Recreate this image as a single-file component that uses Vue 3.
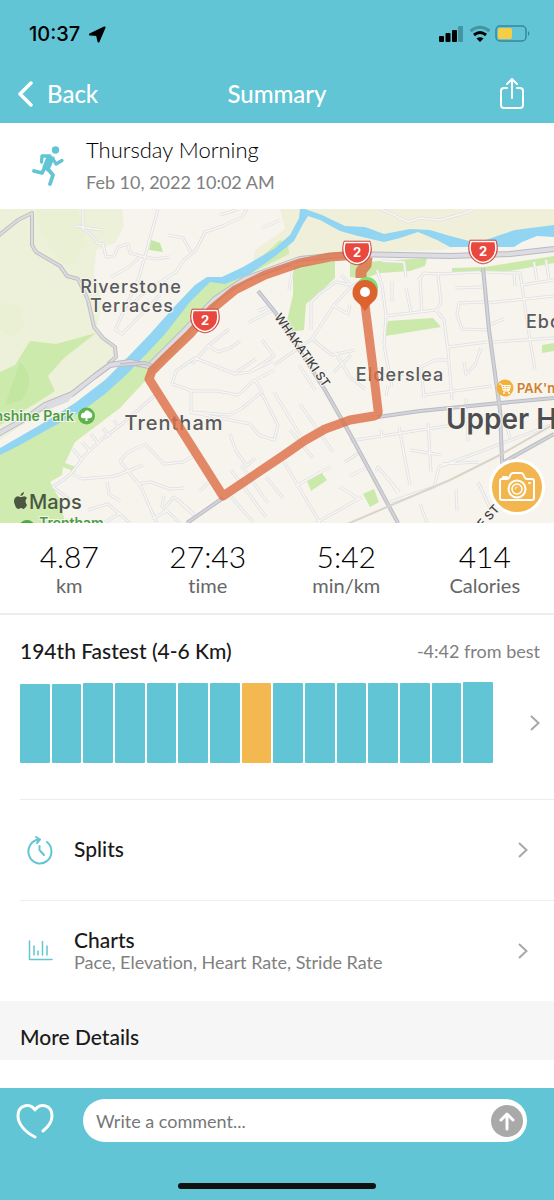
<script setup>
import { ref } from 'vue'

const comment = ref('')

const stats = [
  { value: '4.87', unit: 'km' },
  { value: '27:43', unit: 'time' },
  { value: '5:42', unit: 'min/km' },
  { value: '414', unit: 'Calories' },
]

const bars = [79, 79, 80, 80, 80, 80, 80, 80, 80, 80, 80, 80, 80, 80, 81].map((height, i) => ({
  height,
  current: i === 7,
}))

const shields = [
  { x: 205, y: 320 },
  { x: 357, y: 252 },
  { x: 483, y: 251 },
]

const minorRoads = [
  'M158 209 L144 260 L138 280 L115 330',
  'M83 209 V229 L93 236 L97 243 L103 244 L106 257 L114 256 L118 247 L128 244 L130 253 L141 256 L155 259 L170 257',
  'M75 226 L102 230',
  'M141 256 L129 267 L111 277',
  'M168 235 L183 238 L191 252',
  'M247 209 L242 217 L223 226 L205 232 L196 250 L184 260 L176 272 L145 292 L126 310',
  'M160 295 L122 334 L114 329',
  'M220 215 L239 209 M262 228 L280 220',
  'M380 209 L392 214 L408 222 L420 218 L440 220 L465 213 L474 209',
  'M248 323 L275 309 M258 311 L268 307',
  'M229 329 L208 346 L192 364 M208 346 L218 352 L230 348 L240 341',
  'M256 359 L235 373 M262 340 L274 356 L253 370',
  'M172 384 L176 371 L195 358 L210 364 L235 374 L250 372 L272 361',
  'M274 370 L252 382 L238 395 L217 391 L192 391 L187 389 L172 384',
  'M191 390 V412 L230 415 L242 408 L262 392 L255 380',
  'M190 412 L250 424 L259 435 L274 440 L278 425 L262 394',
  'M230 434 L236 451 L247 466 L255 458',
  'M160 391 L122 424 L101 440 L85 455 L70 475 L53 487 L70 500',
  'M118 427 L114 420 M110 437 L103 428 M99 444 L91 434 M90 451 L82 442 M81 459 L73 449',
  'M73 474 L82 479 L115 476 L143 465',
  'M120 461 L141 487 L151 510 L157 523 M120 461 L127 453 L145 444 L152 451 L164 464 L183 462 L195 455',
  'M137 484 L151 482 L170 489 L184 488',
  'M107 482 L109 494 L120 501 M88 510 L108 504 L130 523 M104 523 L120 513',
  'M164 496 L162 506 L180 523 M166 506 L174 497 L197 518 M152 519 L168 510',
  'M200 491 L209 482 M177 499 L194 514',
  'M231 470 L266 517 M225 490 L253 522 M241 465 L268 503 M266 477 L283 498',
  'M284 462 L320 523 M296 486 L330 467 M290 430 L313 458 M300 404 L333 452 M274 392 L300 435',
  'M350 441 L453 425 M381 430 L382 438 M399 427 L404 454 L410 485 M428 423 L431 472',
  'M360 452 L345 462 M366 468 L350 476 M376 471 L378 467 L399 492 M388 478 L398 493',
  'M390 502 L434 487 L439 467 L554 424 M442 464 L479 462 M340 487 L360 500',
  'M316 523 L362 497 M456 489 L457 511 M478 482 L490 508 M420 504 L427 523',
  'M466 398 L468 442 M503 413 L510 438',
  'M351 355 L334 372 M335 352 L350 377 L365 389 M299 365 L315 390',
  'M274 365 L312 339 L332 355 L355 350 M312 339 L334 305 L350 288 L362 280',
  'M311 330 V302 L320 293 L336 282 L350 285 M334 306 L348 314 L350 305',
  'M289 290 L294 262 M341 275 L350 284',
  'M377 270 L382 285 L386 315 L384 345 L392 387 M382 261 L404 262 L406 277',
  'M392 281 V302 M406 288 L411 312 M418 280 L424 273 L438 274 L480 272',
  'M438 275 L441 303 L436 310 L385 316 M436 310 L444 320 L448 350 L452 400 M420 277 L422 312',
  'M455 288 L482 287 M484 302 L459 303 L457 315 L462 329 L488 330 M489 325 L504 319',
  'M487 303 L554 296 M493 342 L554 338 M448 347 L487 342 M484 272 L520 273 L530 340 L535 370',
  'M534 262 L537 280 M546 260 L549 280 M514 273 L515 286 M522 285 L554 280',
  'M424 398 L421 367 L435 360 L448 360 M424 395 L492 386 M464 362 L466 374 L475 365 L481 348',
  'M410 450 L441 455 M378 376 L404 374 M388 386 L386 396',
]

const majorRoads = [
  'M258 291 L275 312 L325 390 L350 434 L398 523',
  'M378 417 L420 411 L490 404 L554 398',
  'M483 268 L489 330 L500 410 L502 460 L506 500',
  'M502 463 L554 434',
  'M223 498 L187 523',
  'M120 365 L145 363 L155 367',
]
</script>

<template>
  <div class="screen">
    <header class="top">
      <div class="status">
        <div class="clock">
          <span>10:37</span>
          <svg width="17" height="17" viewBox="0 0 17 17" aria-hidden="true">
            <path d="M15.500 1.500 L1 8.500 L8 9 L9.500 15.500 Z" fill="#000" stroke="#000" stroke-width="2" stroke-linejoin="round" />
          </svg>
        </div>
        <svg class="indicators" width="96" height="20" viewBox="0 0 96 20" aria-hidden="true">
          <rect x="1" y="12" width="5" height="6" rx="1" />
          <rect x="7.500" y="9" width="5" height="9" rx="1" />
          <rect x="14" y="6" width="5" height="12" rx="1" />
          <rect x="20" y="2" width="5" height="16" rx="1" fill="#4296a3" />
          <path d="M32.500 7 Q42 -0.500 51.500 7" fill="none" stroke="#4296a3" stroke-width="3" />
          <path d="M36 11 Q42 6 48 11" fill="none" stroke="#000" stroke-width="3" />
          <path d="M38.500 14.500 Q42 12 45.500 14.500 L42 18 Z" />
          <rect x="58" y="2" width="30" height="15" rx="4" fill="none" stroke="#3b8794" stroke-width="1.500" />
          <rect x="60" y="4" width="14" height="11" rx="2" fill="#f7cd46" />
          <path d="M90 7 Q93 9.500 90 12 Z" fill="#3b8794" />
        </svg>
      </div>
      <nav class="nav">
        <button class="back" type="button">
          <svg width="16" height="28" viewBox="0 0 16 28" aria-hidden="true">
            <path d="M13 3 L2 14 L13 25" fill="none" stroke="#fff" stroke-width="3.500" stroke-linecap="round" stroke-linejoin="round" />
          </svg>
          <span>Back</span>
        </button>
        <h1>Summary</h1>
        <button class="share" type="button" aria-label="Share">
          <svg width="26" height="34" viewBox="0 0 26 34" fill="none" stroke="#fff" stroke-width="2" stroke-linecap="round" stroke-linejoin="round" aria-hidden="true">
            <path d="M8 11 H5 Q2 11 2 14 V28 Q2 31 5 31 H21 Q24 31 24 28 V14 Q24 11 21 11 H18 M13 21 V2 M8 7 L13 2 L18 7" />
          </svg>
        </button>
      </nav>
    </header>

    <main>
      <section class="activity">
        <svg width="34" height="42" viewBox="0 0 34 42" fill="none" stroke="#61c5d5" stroke-linecap="round" stroke-linejoin="round" aria-hidden="true">
          <circle cx="23.500" cy="5" r="3.700" fill="#61c5d5" stroke="none" />
          <path d="M16 12 L21 13 L16 25 L12 22 Z" fill="#61c5d5" stroke-width="3" />
          <path d="M18 11 L10 11 L9.500 17 M21 14 L24 19 L30 15.500" stroke-width="3.300" />
          <path d="M13 22 L10 28 L2 26 M15 23 L21 30 L18 39" stroke-width="3.800" />
        </svg>
        <div>
          <h2>Thursday Morning</h2>
          <time datetime="2022-02-10T10:02">Feb 10, 2022 10:02 AM</time>
        </div>
      </section>

      <section class="map" aria-label="Route map">
        <svg class="map-canvas" viewBox="0 209 554 314" role="img" aria-label="Running route through Trentham and Elderslea">
          <rect y="209" width="554" height="314" fill="#f6f4ec" />
          <path d="M0 209 H122 L124 226 L115 243 L96 250 L94 275 L102 300 L97 330 L118 348 L110 365 L60 400 L0 440 Z" fill="#eef1d9" />
          <path d="M36 209 H78 L86 240 L72 268 L58 260 L40 230 Z M0 300 L20 306 L25 325 L12 337 L0 330 Z" fill="#e9f0d3" />
          <path d="M280 209 H554 V229 L500 240 L440 250 L365 252 L300 262 L250 278 L255 250 L285 229 Z" fill="#f0f0da" />
          <path d="M0 372 L15 365 L30 341 L56 344 L96 333 L64 358 L48 376 L55 391 L38 402 L0 425 Z" fill="#cdeaad" />
          <path d="M20 362 Q37 378 22 400 L5 405 Z" fill="#c3e6a1" />
          <path d="M0 450 L50 428 L105 392 L140 362 L165 330 L190 300 L208 281 L245 272 L280 240 L288 244 L289 254 L250 274 L225 295 L210 312 L185 340 L146 380 L120 408 L75 442 L65 463 L76 467 L75 472 L63 467 L62 475 L50 482 L60 500 L65 523 H0 Z" fill="#cfebb0" />
          <path d="M151 240 L160 243 L163 252 L149 250 Z" fill="#c5e7a5" />
          <path d="M293 266 L335 261 V278 L318 294 L306 304 L304 330 L290 332 L286 325 L293 295 Z" fill="#cbe9ab" />
          <path d="M350 263 L427 258 L425 266 L410 271 L380 273 L365 278 L350 277 Z M452 268 L485 267 L554 256 V263 L510 271 L452 273 Z M388 321 L433 318 L441 327 L385 336 Z M307 481 L321 472 L327 480 L311 491 Z M363 494 L374 489 L379 502 L370 507 Z M542 345 L554 343 V351 L542 353 Z" fill="#cbe9ab" />

          <path d="M0 448 L40 425 L75 403 L105 380 L125 360 L150 334 L175 306 L195 285 L207 277 L222 277 L243 267 L274 249 L290 235 L299 218 L300 209 H305 L322 215 L345 226 L365 227 L384 234 L410 229 L430 230 L450 236 L477 243 L500 235 L515 230 L554 225 V237 L537 236 L522 242 L514 247 H450 L437 240 L418 232 L400 238 L384 242 L358 236 L340 231 L320 220 L308 216 L303 224 L294 241 L274 257 L250 274 L225 284 L210 282 L190 302 L165 334 L140 361 L125 376 L105 394 L85 409 L45 431 L20 445 L0 455 Z" fill="#91d5f2" />

          <g fill="none" stroke-linejoin="round">
            <path d="M-2 236 L18 220 L32 213 V245 L36 252 L60 266 L67 276 L78 279 L88 300 L94 327 L103 338 L115 347 L116 357 L108 364" stroke="#bfc0c6" stroke-width="4" />
            <path d="M-2 236 L18 220 L32 213 V245 L36 252 L60 266 L67 276 L78 279 L88 300 L94 327 L103 338 L115 347 L116 357 L108 364" stroke="#dcdcdd" stroke-width="2" />
            <path d="M-2 434 L28 417 L45 405 L72 394 L95 376 L110 365 L130 362 L149 366 L185 330 L215 299 L245 279 L300 259 L350 254 L450 256 L510 254 L554 249" stroke="#b9bac3" stroke-width="6" />
            <path d="M-2 434 L28 417 L45 405 L72 394 L95 376 L110 365 L130 362 L149 366 L185 330 L215 299 L245 279 L300 259 L350 254 L450 256 L510 254 L554 249" stroke="#dcdce2" stroke-width="4" />
            <path d="M42 412 L52 401 L75 393 L68 402 Z" fill="#dcdce2" />
            <path v-for="road in minorRoads" :key="'edge' + road" :d="road" stroke="#dfdfe5" stroke-width="3" />
            <path v-for="road in minorRoads" :key="road" :d="road" stroke="#f7f6f1" stroke-width="1.500" />
            <path v-for="road in majorRoads" :key="'edge' + road" :d="road" stroke="#bbbcc4" stroke-width="4" />
            <path v-for="road in majorRoads" :key="road" :d="road" stroke="#d3d4d9" stroke-width="2" />
            <path d="M345 525 L450 480 L500 455 L554 424" stroke="#d8d4cb" stroke-width="2" />
          </g>

          <g class="place" text-anchor="middle">
            <text x="131" y="293" class="town">Riverstone</text>
            <text x="132" y="312" class="town">Terraces</text>
            <text x="400" y="381" class="town">Elderslea</text>
            <text x="174" y="430" class="town large">Trentham</text>
            <text x="526" y="328" class="town" text-anchor="start">Ebdentown</text>
            <text x="446" y="429" class="city" text-anchor="start">Upper Hutt</text>
          </g>
          <text class="street" transform="translate(274 317) rotate(55)">WHAKATIKI ST</text>
          <text class="street" transform="translate(478 534) rotate(-48)">FE ST</text>

          <text x="74" y="421" class="park" text-anchor="end">Sunshine Park</text>
          <circle cx="86.500" cy="416" r="8.500" fill="#5fb24c" />
          <path d="M85.500 421 V418 Q80 419 81 415 Q82 412 84 413 Q86 408 90 412 Q93 413 92 417 Q90 419 87.500 418 V421 Z" fill="#fff" />
          <text x="39" y="528" class="park">Trentham</text>
          <circle cx="27" cy="528" r="8" fill="#4da944" />

          <circle cx="505" cy="388" r="8.500" fill="#f3b13c" />
          <g fill="none" stroke="#fff" stroke-linecap="round">
            <path d="M499.500 384 H501.500 L503.500 391 H509 L510.500 385.500 H502.500" />
            <path d="M503 387.500 H510 M504 389.500 H509 M505 385.500 V391 M508 385.500 V391" />
          </g>
          <circle cx="504" cy="393" r="1" fill="#fff" />
          <circle cx="509" cy="393" r="1" fill="#fff" />
          <text x="517" y="393" class="shop">PAK'nSAVE</text>

          <path d="M365 305 L372 360 L378 410 Q379 415 374 416 L350 420 L325 429 L304 441 L284 455 L223 496 L149 379 L152 371 L165 358 L190 334 L212 309 L235 290 L265 275 L300 263 L330 257 L358 255" fill="none" stroke="#dd7048" stroke-opacity="0.820" stroke-width="9" stroke-linejoin="round" stroke-linecap="round" />
          <path d="M367 257 L366 265 L361 271 L361 278" fill="none" stroke="#dd7048" stroke-opacity="0.820" stroke-width="11" stroke-linejoin="round" />

          <g v-for="shield in shields" :key="shield.x" :transform="`translate(${shield.x} ${shield.y})`">
            <path d="M-13 -11 H13 Q16 -2 13 4 Q9 12 0 13 Q-9 12 -13 4 Q-16 -2 -13 -11 Z" fill="#e9483f" stroke="#a93636" stroke-width="0.500" />
            <path d="M-12 -9.500 H12 Q14 -2 11.500 3.500 Q8 10.500 0 11.500 Q-8 10.500 -11.500 3.500 Q-14 -2 -12 -9.500 Z" fill="none" stroke="#fff" stroke-width="1.500" />
            <text class="shield" y="5" text-anchor="middle">2</text>
          </g>

          <circle cx="367" cy="288" r="11" fill="#80e078" />
          <path d="M365 311 Q361 305 355 300 A12.500 12.500 0 1 1 375 300 Q369 305 365 311 Z" fill="#dc632d" />
          <circle cx="365" cy="292" r="5" fill="#fff" />

          <g fill="#4c5743">
            <path d="M22 497 Q25 495 27 498 Q24 501 27 505 Q25 509 23 509 Q21 507 19 509 Q16 509 15 505 Q13 501 15 498 Q17 495 20 497 Z" />
            <path d="M20.500 496 Q20.500 493 24 492 Q24 495 20.500 496 Z" />
            <text x="29" y="509" class="brand">Maps</text>
          </g>
        </svg>
        <button class="camera" type="button" aria-label="Add photo">
          <svg width="38" height="32" viewBox="0 0 38 32" fill="none" stroke="#fff" stroke-width="2" stroke-linecap="round" stroke-linejoin="round" aria-hidden="true">
            <path d="M3 8 H9 Q11 8 12 5 Q13 2 15 2 H23 Q25 2 26 5 Q27 8 29 8 H34 Q36 8 36 10 V27 Q36 29 34 29 H4 Q2 29 2 27 V10 Q2 8 4 8 M5 8 V6 H9 V8 M31 12 H32" />
            <circle cx="19" cy="18" r="8.500" />
            <circle cx="19" cy="18" r="5" stroke-width="1.500" />
            <path d="M17 18 Q17 16 19 16" stroke-width="1" />
          </svg>
        </button>
      </section>

      <dl class="stats">
        <div v-for="stat in stats" :key="stat.unit">
          <dd>{{ stat.value }}</dd>
          <dt>{{ stat.unit }}</dt>
        </div>
      </dl>

      <section class="ranking">
        <div class="ranking-head">
          <h3>194th Fastest (4-6 Km)</h3>
          <span>-4:42 from best</span>
        </div>
        <button class="ranking-body" type="button" aria-label="Show ranking">
          <span class="bars">
            <span v-for="(bar, i) in bars" :key="i" class="bar" :class="{ current: bar.current }" :style="{ height: bar.height + 'px' }"></span>
          </span>
          <svg class="chevron" width="10" height="18" viewBox="0 0 10 18" aria-hidden="true"><path d="M1 2 L8.500 9 L1 16" /></svg>
        </button>
      </section>

      <button class="row" type="button">
        <svg width="28" height="30" viewBox="0 0 28 30" fill="none" stroke="#61c5d5" stroke-width="2" stroke-linecap="round" stroke-linejoin="round" aria-hidden="true">
          <path d="M21 7 A11.500 12 0 1 1 13 4.500 M10 2 L14 4.500 L11 8 M13.500 11 V15 L18 20" />
        </svg>
        <span class="row-text"><strong>Splits</strong></span>
        <svg class="chevron" width="10" height="18" viewBox="0 0 10 18" aria-hidden="true"><path d="M1 2 L8.500 9 L1 16" /></svg>
      </button>
      <button class="row" type="button">
        <svg width="28" height="24" viewBox="0 0 28 24" fill="none" stroke="#61c5d5" stroke-width="1.500" stroke-linecap="round" stroke-linejoin="round" aria-hidden="true">
          <path d="M3.500 2 V20.500 H26 M8 7 V16 M12 12 V16 M16.500 2.500 V16 M21 7 V16" />
        </svg>
        <span class="row-text"><strong>Charts</strong><small>Pace, Elevation, Heart Rate, Stride Rate</small></span>
        <svg class="chevron" width="10" height="18" viewBox="0 0 10 18" aria-hidden="true"><path d="M1 2 L8.500 9 L1 16" /></svg>
      </button>
      <h3 class="more">More Details</h3>
    </main>

    <footer class="bottom">
      <form class="comment-form" @submit.prevent>
        <button class="like" type="button" aria-label="Like">
          <svg width="38" height="36" viewBox="0 0 38 36" fill="none" stroke="#fff" stroke-width="3" stroke-linecap="round" stroke-linejoin="round" aria-hidden="true">
            <path d="M19 34 C9 29 2 21 2 13 C2 2 14 -1 19 7 C24 -1 36 2 36 13 C36 19 32 24 27 28" />
          </svg>
        </button>
        <div class="field">
          <input v-model="comment" type="text" placeholder="Write a comment..." aria-label="Write a comment" />
          <button class="send" type="submit" aria-label="Send">
            <svg width="16" height="20" viewBox="0 0 16 20" fill="none" stroke="#fff" stroke-width="3" stroke-linecap="round" stroke-linejoin="round" aria-hidden="true">
              <path d="M8 18 V3 M2 9 L8 3 L14 9" />
            </svg>
          </button>
        </div>
      </form>
      <div class="home-bar"></div>
    </footer>
  </div>
</template>

<style>
body {
  margin: 0;
}
</style>

<style scoped>
* {
  box-sizing: border-box;
}

.screen {
  display: flex;
  flex-direction: column;
  min-height: 100vh;
  background: #fff;
  color: #1a1a1a;
  font-family: Lato, "Liberation Sans", sans-serif;
  font-variant-ligatures: none;
}

button {
  padding: 0;
  border: 0;
  background: none;
  color: inherit;
  font: inherit;
  text-align: left;
}

svg {
  display: block;
  flex: none;
}

h1, h2, h3, dl, dd {
  margin: 0;
  font-weight: 400;
}

.top {
  background: #61c5d5;
}

.status {
  display: flex;
  justify-content: space-between;
  align-items: center;
  padding: 20px 20px 0 29px;
}

.clock {
  display: flex;
  align-items: center;
  gap: 9px;
  color: #000;
  font: 500 20px/28px Inter, sans-serif;
}

.nav {
  display: grid;
  grid-template-columns: 1fr auto 1fr;
  align-items: center;
  height: 75px;
  padding: 16px 29px 0 18px;
  color: #fff;
}

.back {
  display: flex;
  align-items: center;
  gap: 13px;
  font-size: 24px;
  font-weight: 500;
}

.nav h1 {
  padding-left: 11px;
  font-size: 24px;
  font-weight: 500;
}

.share {
  justify-self: end;
}

.activity {
  display: flex;
  align-items: center;
  gap: 20px;
  height: 86px;
  padding: 0 32px;
}

.activity h2 {
  font-size: 22px;
  font-weight: 300;
  line-height: 32px;
  color: #000;
}

.activity time {
  display: block;
  color: #808080;
  font-size: 18px;
  line-height: 32px;
}

.map {
  position: relative;
}

.map-canvas {
  width: 100%;
  height: auto;
  font-family: Inter, sans-serif;
}

.map-canvas text {
  paint-order: stroke;
  stroke: #f8f6ee;
  stroke-width: 2px;
}

.map-canvas .town {
  fill: #595b5f;
  font-size: 18px;
  font-weight: 500;
  letter-spacing: 1px;
}

.map-canvas .town.large {
  font-size: 20px;
}

.map-canvas .city {
  fill: #4d4e52;
  font-size: 28px;
  font-weight: 600;
}

.map-canvas .street {
  fill: #3f4044;
  font-size: 12px;
  font-weight: 500;
}

.map-canvas .park {
  fill: #4b9d42;
  font-size: 14px;
  font-weight: 600;
}

.map-canvas .shop {
  fill: #d08030;
  font-size: 13px;
  font-weight: 600;
}

.map-canvas .shield {
  fill: #fff;
  stroke: none;
  font-size: 13px;
  font-weight: 700;
}

.map-canvas .brand {
  stroke: none;
  font-size: 20px;
  font-weight: 500;
}

.camera {
  position: absolute;
  right: 9px;
  bottom: 8px;
  display: grid;
  place-items: center;
  width: 56px;
  height: 56px;
  border: 3px solid #fff;
  border-radius: 50%;
  background: #f3b64f;
}

.stats {
  display: grid;
  grid-template-columns: repeat(4, 1fr);
  padding: 16px 0;
  border-bottom: 2px solid #ececec;
  text-align: center;
}

.stats div {
  display: flex;
  flex-direction: column;
}

.stats dd {
  color: #000;
  font-size: 30px;
  font-weight: 300;
  line-height: 34px;
}

.stats dt {
  color: #666;
  font-size: 20px;
  line-height: 24px;
}

.ranking {
  padding: 20px 14px 36px 20px;
}

.ranking-head {
  display: flex;
  justify-content: space-between;
  align-items: center;
}

.ranking-head h3 {
  font-size: 21px;
  font-weight: 500;
  line-height: 32px;
}

.ranking-head span {
  color: #808080;
  font-size: 18px;
}

.ranking-body {
  display: flex;
  align-items: center;
  gap: 37px;
  width: 100%;
  margin-top: 15px;
}

.bars {
  display: flex;
  flex: 1;
  align-items: flex-end;
  gap: 2px;
  height: 81px;
}

.bar {
  flex: 1;
  border-radius: 1px;
  background: #61c5d5;
}

.bar.current {
  background: #f4b851;
}

.chevron {
  fill: none;
  stroke: #a8a8a8;
  stroke-width: 2px;
}

.row {
  display: flex;
  align-items: center;
  gap: 20px;
  width: calc(100% - 20px);
  height: 101px;
  margin-left: 20px;
  padding: 0 26px 0 6px;
  border-top: 1px solid #ededed;
}

.row-text {
  display: flex;
  flex: 1;
  flex-direction: column;
  padding-bottom: 3px;
}

.row-text strong {
  font-size: 21px;
  font-weight: 500;
  line-height: 24px;
}

.row-text small {
  color: #808080;
  font-size: 18px;
  line-height: 20px;
}

.more {
  padding: 25px 20px 12px;
  background: #f6f6f6;
  font-size: 21px;
  font-weight: 500;
  line-height: 22px;
}

.bottom {
  display: flex;
  flex-direction: column;
  gap: 41px;
  margin-top: auto;
  padding: 11px 0;
  background: #61c5d5;
}

.comment-form {
  display: flex;
  align-items: center;
  gap: 29px;
  padding: 0 27px 0 16px;
}

.field {
  display: flex;
  flex: 1;
  align-items: center;
  height: 43px;
  padding: 0 4px 0 13px;
  border-radius: 22px;
  background: #fff;
}

.field input {
  flex: 1;
  min-width: 0;
  padding: 0;
  border: 0;
  outline: 0;
  background: none;
  color: #333;
  font: 400 18px/24px Lato, "Liberation Sans", sans-serif;
}

.field input::placeholder {
  color: #777;
  opacity: 1;
}

.send {
  display: grid;
  place-items: center;
  width: 32px;
  height: 32px;
  border-radius: 50%;
  background: #a9a9a9;
}

.home-bar {
  align-self: center;
  width: 198px;
  height: 6px;
  border-radius: 3px;
  background: #111;
}
</style>
